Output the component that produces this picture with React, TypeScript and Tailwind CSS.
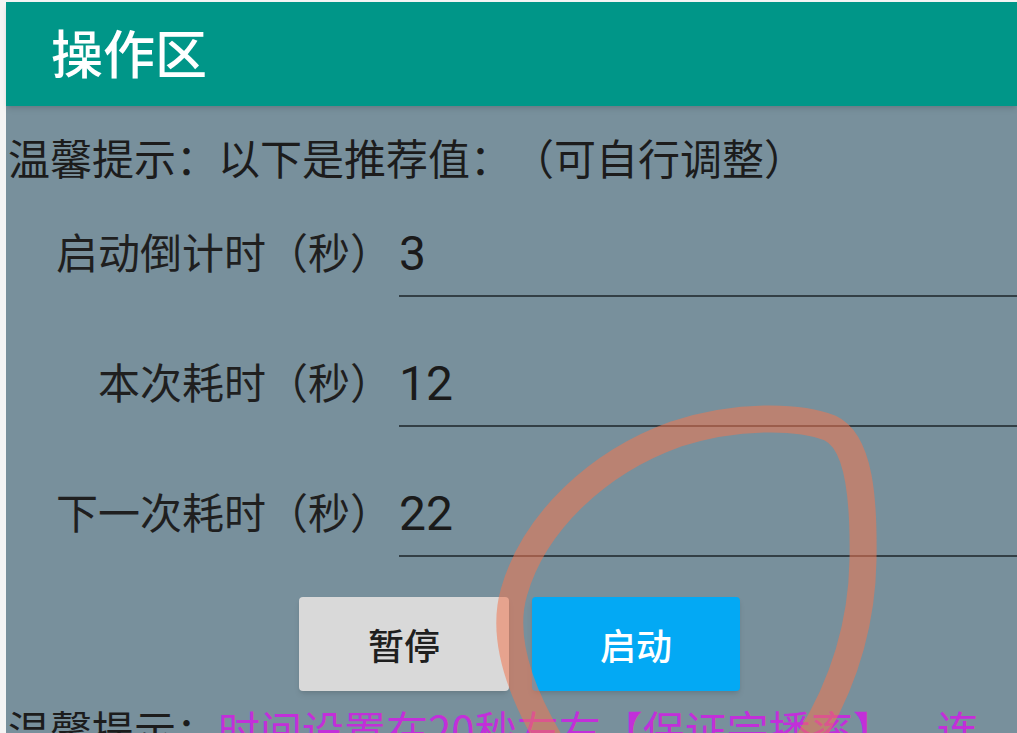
import React from 'react';

const rows = [
  { label: '启动倒计时（秒）', value: '3' },
  { label: '本次耗时（秒）', value: '12' },
  { label: '下一次耗时（秒）', value: '22' },
];

export default function App() {
  return (
    <div className="relative w-[1017px] h-[733px] overflow-hidden bg-[#f4f4f4] pl-[6px] pt-[2px] font-['Noto_Sans_CJK_SC',sans-serif] [text-spacing-trim:space-all]">
      <div className="h-full flex flex-col bg-[#78909c]">
        {/* header */}
        <div className="relative z-10 h-[104px] shrink-0 bg-[#009688] shadow-md flex items-center pl-[45px] pb-[4px]">
          <h1 className="text-white text-[52px] font-medium leading-none">操作区</h1>
        </div>

        <div className="pt-[23px] flex flex-col">
          <p className="h-[56px] leading-[56px] pl-[2px] text-[42px] text-[#1c1c1c] whitespace-nowrap">
            温馨提示：以下是推荐值：（可自行调整）
          </p>

          <div className="mt-[28px] flex flex-col gap-[46px]">
            {rows.map((r) => (
              <div key={r.label} className="flex h-[84px] gap-[7px]">
                <label className="w-[386px] shrink-0 flex items-center justify-end pb-[10px] text-[42px] text-[#1f1f1f] whitespace-nowrap">
                  {r.label}
                </label>
                <div className="flex-1 flex items-center border-b-2 border-[#333f45] text-[48px] text-[#1a1a1a] font-['Roboto',sans-serif]">
                  {r.value}
                </div>
              </div>
            ))}
          </div>

          <div className="mt-[40px] flex justify-center gap-[23px] pl-[16px]">
            <button className="w-[210px] h-[94px] rounded-[4px] bg-[#d9d9d9] shadow-md text-[36px] font-medium text-[#1f1f1f]">
              暂停
            </button>
            <button className="w-[208px] h-[94px] rounded-[4px] bg-[#03a9f4] shadow-md text-[36px] font-medium text-white">
              启动
            </button>
          </div>

          <p className="mt-[10px] leading-[56px] pl-[2px] text-[42px] text-[#1c1c1c]">
            温馨提示：<span className="text-[#c22fd9]">时间设置在20秒左右【保证完播率】，连续</span>
          </p>
        </div>
      </div>

      {/* hand drawn annotation */}
      <svg
        className="absolute inset-0 pointer-events-none"
        width="1017"
        height="733"
        viewBox="0 0 1017 733"
      >
        <path
          d="M 552 745 C 522 695, 500 640, 514 592 C 534 522, 598 462, 676 434 C 738 414, 800 416, 830 428 C 860 442, 864 500, 863 560 C 862 622, 845 684, 806 745"
          fill="none"
          stroke="rgba(240,118,80,0.55)"
          strokeWidth="27"
          strokeLinecap="round"
          strokeLinejoin="round"
        />
      </svg>
    </div>
  );
}
